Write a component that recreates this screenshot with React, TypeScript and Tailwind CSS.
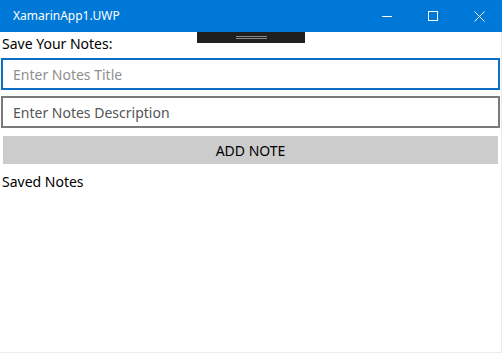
import { useState } from "react";

const font = { fontFamily: '"Segoe UI", "Noto Sans", "Open Sans", sans-serif' };

const TitleBar = () => (
  <div className="flex h-[32px] items-center bg-[#0078d7] text-white">
    <span className="pl-[13px] text-[12px]">XamarinApp1.UWP</span>
    <div className="ml-auto flex h-full">
      <div className="flex h-full w-[46px] items-center justify-center">
        <div className="h-[1px] w-[10px] bg-white" />
      </div>
      <div className="flex h-full w-[46px] items-center justify-center">
        <div className="h-[10px] w-[10px] border border-white" />
      </div>
      <div className="flex h-full w-[46px] items-center justify-center">
        <svg width="11" height="11" viewBox="0 0 11 11">
          <path d="M0.5 0.5 L10.5 10.5 M10.5 0.5 L0.5 10.5" stroke="white" strokeWidth="1" />
        </svg>
      </div>
    </div>
  </div>
);

const App = () => {
  const [title, setTitle] = useState("");
  const [desc, setDesc] = useState("");

  return (
    <div className="relative h-[353px] w-[502px] overflow-hidden bg-white text-black" style={font}>
      <TitleBar />
      {/* debug toolbar overlay */}
      <div className="absolute left-[197px] top-[32px] flex h-[11px] w-[108px] flex-col items-center justify-center gap-[1px] bg-[#1f1f1f]">
        <div className="h-[1px] w-[31px] bg-[#8a8a8a]" />
        <div className="h-[1px] w-[31px] bg-[#8a8a8a]" />
      </div>
      <div className="flex flex-col border-r border-b border-[#ececec]" style={{ height: 321 }}>
        <div className="pl-[2px] pt-[1px] text-[14px] leading-[21px]">Save Your Notes:</div>
        <input
          value={title}
          onChange={(e) => setTitle(e.target.value)}
          placeholder="Enter Notes Title"
          className="mx-[1px] mt-[4px] h-[32px] border-2 border-[#0c6fc4] px-[10px] text-[14px] outline-none placeholder:text-[#8f8f8f]"
        />
        <input
          value={desc}
          onChange={(e) => setDesc(e.target.value)}
          placeholder="Enter Notes Description"
          className="mx-[1px] mt-[6px] h-[32px] border-2 border-[#7a7a7a] px-[10px] text-[14px] outline-none placeholder:text-[#555555]"
        />
        <button className="mx-[3px] mt-[8px] h-[28px] bg-[#cccccc] text-[14px]">ADD NOTE</button>
        <div className="pl-[2px] pt-[8px] text-[14px] leading-[20px]">Saved Notes</div>
      </div>
    </div>
  );
};

export default App;
